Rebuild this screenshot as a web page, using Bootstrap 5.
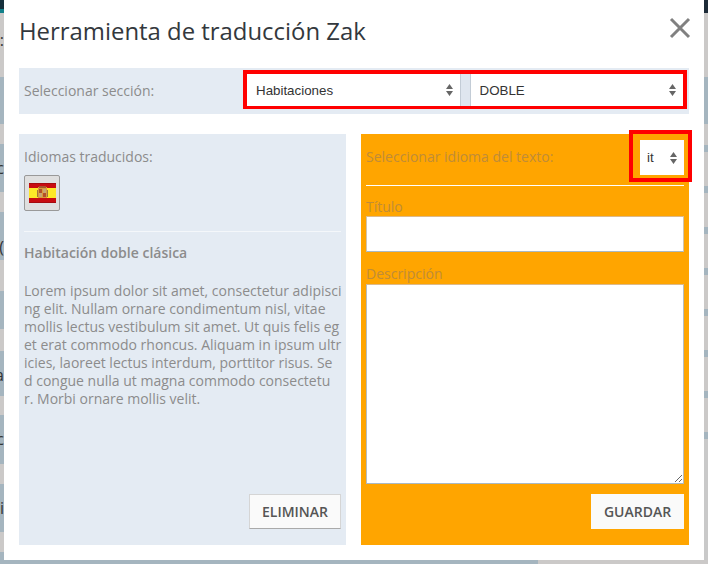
<!DOCTYPE html>
<html lang="es">
<head>
<meta charset="utf-8">
<title>Herramienta de traducción Zak</title>
<link href="https://cdn.jsdelivr.net/npm/bootstrap@5.3.0/dist/css/bootstrap.min.css" rel="stylesheet">
<style>
html,body{height:564px;overflow:hidden;background:#c9c9c9;}
body{font-family:"Open Sans",sans-serif;font-size:14px;line-height:18px;color:#8c8c8c;}
.stage{width:708px;height:564px;overflow:hidden;}
.behind{width:708px;height:560px;}
.edge{width:4px;height:560px;overflow:hidden;}
.edge-top-l{height:13px;background:linear-gradient(#16303c 70%,#12808a 70%);}
.edge-top-r{height:13px;background:#1d2b38;}
.band{background:#a5b5bf;color:#333;font-size:16px;line-height:48px;white-space:nowrap;display:flex;justify-content:flex-end;}
.band-low{line-height:70px;}
.gapband{background:#cbc9c8;color:#333;font-size:16px;line-height:54px;display:flex;justify-content:flex-end;white-space:nowrap;}
.h7{height:7px;}.h20{height:20px;}.h34{height:34px;}.h48{height:48px;}
.floorbar{height:4px;background:linear-gradient(90deg,#a5b5bf 76%,#cbc9c8 76%);}
.zak-dialog{position:absolute;left:4px;top:0;width:700px;height:560px;background:#fff;padding:0 15px;}
.zak-title{font-size:23.9px;line-height:30px;font-weight:400;color:#33383d;margin:0;padding-top:16px;height:68px;}
.zak-close{position:absolute;right:13px;top:17px;width:22px;height:22px;padding:0;border:0;background:none;}
.sec-bar{height:46px;background:#e4ebf3;padding:2px 2px 0 5px;}
.sec-label{width:219px;line-height:42px;}
.red-box{border:4px solid #f00;border-bottom-width:3px;height:39px;flex:1;}
.red-box .form-select{flex:1 1 0;}
.zak-sel{height:100%;border:0;border-radius:0;background-color:#fff;background-image:url("data:image/svg+xml,%3Csvg xmlns='http://www.w3.org/2000/svg' width='7' height='12'%3E%3Cpath fill='%23666' d='M3.5 0L7 5H0zM3.5 12L0 7h7z'/%3E%3C/svg%3E");background-size:7px 12px;background-position:right 7px center;background-repeat:no-repeat;font-family:"Liberation Sans",sans-serif;font-size:13.33px;color:#333;padding:1px 8px 0 9px;box-shadow:none;}
.sel-gap{width:11px;background:#dfe6ef;border-left:1px solid #c3ccd6;border-right:1px solid #c3ccd6;}
.panels{margin-top:20px;gap:15px;height:411px;}
.pane{width:327px;padding:0 5px;display:flex;flex-direction:column;}
.pane-blue{background:#e4ebf3;}
.pane-orange{width:328px;background:#ffa500;color:#c08c38;}
.pane-head{height:41px;padding-top:14px;}
.flag-btn{width:36px;height:36px;padding:0;background:#dfdfdf;border:1px solid #999;border-radius:2px;display:flex;align-items:center;justify-content:center;}
.rule-blue{margin:20px 0 12px;border:0;border-top:1px solid #f4f7fa;opacity:1;}
.room-title{font-weight:600;font-size:14px;line-height:18px;margin:0 0 20px;}
.room-text{white-space:nowrap;margin:0;font-size:14px;line-height:18px;}
.zak-btn{height:35px;background:#fafafa;border:1px solid #d5d5d5;border-bottom-color:#aaa;border-radius:0;font-weight:600;font-size:14px;color:#555;padding:0;}
.act-row{padding-bottom:16px;}
.btn-del{width:92px;}
.btn-save{width:93px;border-color:#fafafa;}
.lang-head{height:51px;padding-top:14px;}
.lang-box{position:absolute;right:-8px;top:-4px;width:63px;height:52px;border:4px solid #f00;}
.lang-sel{position:absolute;left:7px;top:6px;width:44px;height:35px;padding-left:7px;}
.rule-white{margin:0 0 12px;border:0;border-top:1px solid #fff;opacity:1;}
.field-label{display:block;margin:0;line-height:18px;}
.field-next{margin:13px 0 1px;}
.zak-input{height:36px;border-radius:0;border:1px solid;border-color:#dcb98a #cfc4b0 #a9b9c4;padding:4px 8px;}
.zak-area{height:200px;border-radius:0;border:1px solid;border-color:#dcb98a #b5bcc0 #a9b9c4;}
</style>
</head>
<body>
<div class="stage position-relative">
  <div class="behind d-flex justify-content-between">
    <div class="edge">
      <div class="edge-top-l"></div>
      <div class="gapband" style="height:64px">:</div>
      <div class="band" style="height:47px"></div>
      <div class="gapband h20"></div>
      <div class="band h48">c</div>
      <div class="gapband h20"></div>
      <div class="band band-low h48">(</div>
      <div class="gapband" style="height:31px"></div>
      <div class="band" style="height:38px"></div>
      <div class="gapband" style="height:22px"></div>
      <div class="band" style="height:45px">a</div>
      <div class="gapband" style="height:19px"></div>
      <div class="band" style="height:49px">c</div>
      <div class="gapband h20"></div>
      <div class="band h48">i</div>
      <div class="gapband h20"></div>
      <div class="band" style="height:8px"></div>
    </div>
    <div class="edge">
      <div class="edge-top-r"></div>
      <div class="gapband" style="height:64px"></div>
      <div class="band" style="height:47px"></div>
      <div class="gapband" style="height:21px"></div>
      <div class="band h7"></div><div class="gapband h34"></div>
      <div class="band h7"></div><div class="gapband h34"></div>
      <div class="band h7"></div><div class="gapband h34"></div>
      <div class="band h7"></div><div class="gapband h34"></div>
      <div class="band h7"></div><div class="gapband h34"></div>
      <div class="band h7"></div><div class="gapband h34"></div>
      <div class="band h7"></div><div class="gapband h34"></div>
      <div class="band h7"></div>
    </div>
  </div>
  <div class="floorbar"></div>

  <div class="zak-dialog">
    <h4 class="zak-title">Herramienta de traducción Zak</h4>
    <button type="button" class="zak-close" aria-label="Cerrar">
      <svg width="22" height="22" viewBox="0 0 22 22"><path d="M2 2l18 18M20 2L2 20" stroke="#808080" stroke-width="3" fill="none"/></svg>
    </button>
    <div class="sec-bar d-flex">
      <div class="sec-label">Seleccionar sección:</div>
      <div class="red-box d-flex">
        <select class="form-select zak-sel"><option>Habitaciones</option></select>
        <div class="sel-gap"></div>
        <select class="form-select zak-sel"><option>DOBLE</option></select>
      </div>
    </div>
    <div class="panels d-flex">
      <section class="pane pane-blue">
        <div class="pane-head">Idiomas traducidos:</div>
        <button type="button" class="flag-btn" aria-label="Español">
          <svg width="27" height="20" viewBox="0 0 27 20"><rect width="27" height="20" fill="#c80c10"/><rect width="27" height="1" fill="#a40a0e"/><rect y="19" width="27" height="1" fill="#a40a0e"/><rect y="5" width="27" height="10" fill="#fde828"/><rect x="9" y="4" width="9" height="11" fill="#d99a3a"/><rect x="10" y="3" width="7" height="2" fill="#a8552a"/><rect x="10" y="6" width="3" height="4" fill="#b2502a"/><rect x="14" y="6" width="3" height="4" fill="#c9a470"/><rect x="10" y="10" width="3" height="4" fill="#c9a470"/><rect x="14" y="10" width="3" height="4" fill="#b2502a"/><rect x="8" y="7" width="1" height="7" fill="#a3743e"/><rect x="18" y="7" width="1" height="7" fill="#a3743e"/></svg>
        </button>
        <hr class="rule-blue">
        <h5 class="room-title">Habitación doble clásica</h5>
        <p class="room-text">Lorem ipsum dolor sit amet, consectetur adipisci<br>ng elit. Nullam ornare condimentum nisl, vitae<br>mollis lectus vestibulum sit amet. Ut quis felis eg<br>et erat commodo rhoncus. Aliquam in ipsum ultr<br>icies, laoreet lectus interdum, porttitor risus. Se<br>d congue nulla ut magna commodo consectetu<br>r. Morbi ornare mollis velit.</p>
        <div class="mt-auto act-row d-flex justify-content-end"><button type="button" class="btn zak-btn btn-del">ELIMINAR</button></div>
      </section>
      <section class="pane pane-orange">
        <div class="lang-head d-flex align-items-start position-relative">
          <span>Seleccionar idioma del texto:</span>
          <div class="lang-box"><select class="form-select zak-sel lang-sel"><option>it</option></select></div>
        </div>
        <hr class="rule-white">
        <label class="field-label" for="t1">Título</label>
        <input id="t1" class="form-control zak-input" type="text">
        <label class="field-label field-next" for="d1">Descripción</label>
        <textarea id="d1" class="form-control zak-area"></textarea>
        <div class="mt-auto act-row d-flex justify-content-end"><button type="button" class="btn zak-btn btn-save">GUARDAR</button></div>
      </section>
    </div>
  </div>
</div>
</body>
</html>
